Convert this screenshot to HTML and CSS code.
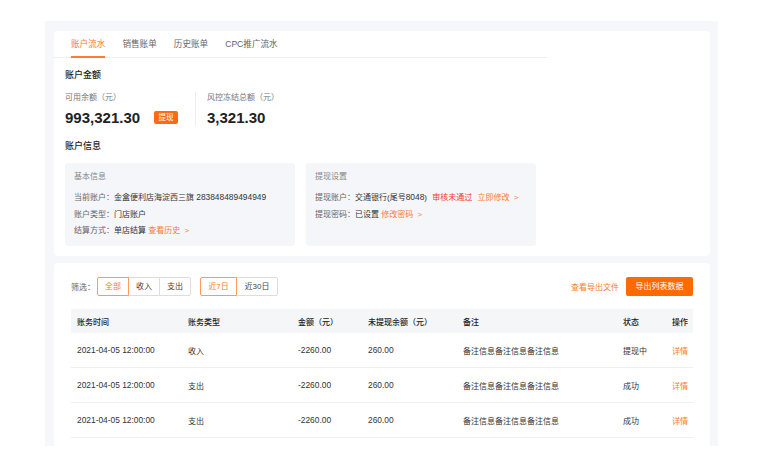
FILE: index.html
```html
<!DOCTYPE html>
<html lang="zh-CN">
<head>
<meta charset="UTF-8" />
<meta name="viewport" content="width=device-width, initial-scale=1" />
<title>账户流水</title>
<link rel="stylesheet" href="styles.css">
</head>
<body>
  <div class="panel">
    <div class="card card-top">
      <div class="tabs">
        <span class="tab active">账户流水</span>
        <span class="tab">销售账单</span>
        <span class="tab">历史账单</span>
        <span class="tab">CPC推广流水</span>
      </div>
      <div class="card-body">
        <div class="section-title">账户金额</div>
        <div class="amounts">
          <div class="amount">
            <div class="amount-label">可用余额（元）</div>
            <div class="amount-row">
              <span class="amount-value">993,321.30</span>
              <span class="badge">提现</span>
            </div>
          </div>
          <div class="amount amount-second">
            <div class="amount-label">风控冻结总额（元）</div>
            <div class="amount-row">
              <span class="amount-value">3,321.30</span>
            </div>
          </div>
        </div>

        <div class="section-title section-gap">账户信息</div>
        <div class="info-grid">
          <div class="info-box">
            <div class="info-title">基本信息</div>
            <div class="info-line"><span class="k">当前账户：</span>金盒便利店海淀西三旗&nbsp;<span class="num">283848489494949</span></div>
            <div class="info-line"><span class="k">账户类型：</span>门店账户</div>
            <div class="info-line"><span class="k">结算方式：</span>单店结算 <a class="link">查看历史 <span class="chev">&gt;</span></a></div>
          </div>
          <div class="info-box">
            <div class="info-title">提现设置</div>
            <div class="info-line"><span class="k">提现账户：</span>交通银行(尾号<span class="num">8048</span>) <span class="err">审核未通过</span> <a class="link">立即修改 <span class="chev">&gt;</span></a></div>
            <div class="info-line"><span class="k">提现密码：</span>已设置 <a class="link">修改密码 <span class="chev">&gt;</span></a></div>
          </div>
        </div>
      </div>
    </div>

    <div class="card card-list">
      <div class="toolbar">
        <div class="filters">
          <span class="filter-label">筛选：</span>
          <div class="btn-group">
            <span class="seg active">全部</span>
            <span class="seg">收入</span>
            <span class="seg">支出</span>
          </div>
          <div class="btn-group">
            <span class="seg seg-wide active">近7日</span>
            <span class="seg seg-wider">近30日</span>
          </div>
        </div>
        <div class="actions">
          <a class="link">查看导出文件</a>
          <span class="btn-primary">导出列表数据</span>
        </div>
      </div>

      <table class="table">
        <colgroup>
          <col style="width:111px"><col style="width:110px"><col style="width:70px"><col style="width:95px"><col style="width:160px"><col style="width:49px"><col style="width:27px">
        </colgroup>
        <thead>
          <tr><th>账务时间</th><th>账务类型</th><th>金额（元）</th><th>未提现余额（元）</th><th>备注</th><th>状态</th><th>操作</th></tr>
        </thead>
        <tbody>
          <tr><td class="num">2021-04-05 12:00:00</td><td>收入</td><td class="num">-2260.00</td><td class="num">260.00</td><td>备注信息备注信息备注信息</td><td>提现中</td><td><a class="link">详情</a></td></tr>
          <tr><td class="num">2021-04-05 12:00:00</td><td>支出</td><td class="num">-2260.00</td><td class="num">260.00</td><td>备注信息备注信息备注信息</td><td>成功</td><td><a class="link">详情</a></td></tr>
          <tr><td class="num">2021-04-05 12:00:00</td><td>支出</td><td class="num">-2260.00</td><td class="num">260.00</td><td>备注信息备注信息备注信息</td><td>成功</td><td><a class="link">详情</a></td></tr>
        </tbody>
      </table>
    </div>
  </div>
</body>
</html>
```

FILE: styles.css
```css
body {
  margin: 0;
  background: #fff;
  font-family: "Liberation Sans", "Noto Sans CJK SC", sans-serif;
  font-size: 8px;
  color: #333;
}
.num {
  font-size: 8.4px;
}
.panel {
  margin: 21px 0 0 45px;
  width: 673px;
  height: 425px;
  box-sizing: border-box;
  padding: 10px 8px 0 9px;
  background: #f6f7fb;
  overflow: hidden;
}
.card {
  background: #fff;
  border-radius: 4px;
}
.card-top {
  padding-bottom: 10px;
}
.tabs {
  display: flex;
  width: 476px;
  height: 26px;
  padding-left: 17px;
  border-bottom: 1px solid #eeeff2;
}
.tab {
  position: relative;
  margin-right: 17px;
  line-height: 26px;
  font-size: 8.6px;
  color: #666;
}
.tab.active {
  color: #ff7a2e;
}
.tab.active::after {
  content: "";
  position: absolute;
  left: 0;
  right: 0;
  bottom: -1px;
  height: 2px;
  background: #ff7a2e;
}
.card-body {
  padding: 0 11px;
}
.section-title {
  margin-top: 11px;
  line-height: 12px;
  font-size: 9px;
  font-weight: 500;
  color: #222;
}
.section-gap {
  margin-top: 14px;
}
.amounts {
  display: flex;
  margin-top: 11px;
}
.amount {
  width: 130px;
}
.amount-second {
  border-left: 1px solid #eee;
  padding-left: 11px;
}
.amount-label {
  line-height: 12px;
  color: #777;
}
.amount-row {
  display: flex;
  align-items: center;
  margin-top: 4px;
  height: 18px;
}
.amount-value {
  font-size: 15px;
  font-weight: bold;
  color: #222;
}
.badge {
  margin-left: 14px;
  width: 24px;
  height: 13px;
  line-height: 13px;
  text-align: center;
  border-radius: 2px;
  background: #ff6a13;
  color: #fff;
  font-size: 7.5px;
}
.info-grid {
  display: flex;
  gap: 11px;
  margin-top: 11px;
}
.info-box {
  width: 230px;
  height: 83px;
  box-sizing: border-box;
  padding: 8px 9px;
  background: #f5f6fa;
  border-radius: 3px;
}
.info-title {
  line-height: 12px;
  color: #888;
  margin-bottom: 6px;
}
.info-line {
  line-height: 16.5px;
  color: #333;
}
.info-line .k {
  color: #666;
}
.link {
  color: #ff7a2e;
  cursor: pointer;
}
.err {
  color: #f5392b;
  margin: 0 3px;
}
.chev {
  margin-left: 2px;
}
.card-list {
  margin-top: 7px;
  padding: 14px 17px 40px;
}
.toolbar {
  display: flex;
  justify-content: space-between;
  align-items: center;
  height: 19px;
}
.filters {
  display: flex;
  align-items: center;
}
.filter-label {
  width: 26px;
  color: #666;
}
.btn-group {
  display: flex;
  margin-right: 9px;
}
.seg {
  width: 32px;
  height: 19px;
  line-height: 17px;
  box-sizing: border-box;
  text-align: center;
  border: 1px solid #dcdde2;
  margin-left: -1px;
  color: #444;
  background: #fff;
}
.seg:first-child {
  margin-left: 0;
  border-radius: 2px 0 0 2px;
}
.seg:last-child {
  border-radius: 0 2px 2px 0;
}
.seg.active {
  position: relative;
  border-color: #ff9a5c;
  color: #ff7a2e;
}
.seg-wide { width: 37px; }
.seg-wider { width: 42px; }
.actions {
  display: flex;
  align-items: center;
  gap: 7px;
}
.btn-primary {
  width: 67px;
  height: 19px;
  line-height: 19px;
  text-align: center;
  border-radius: 2px;
  background: #ff6a00;
  color: #fff;
}
.table {
  margin-top: 13px;
  width: 622px;
  border-collapse: collapse;
  table-layout: fixed;
}
.table th {
  height: 24px;
  padding: 0 0 0 6px;
  background: #f5f6f8;
  text-align: left;
  font-weight: 500;
  color: #222;
}
.table td {
  height: 34px;
  padding: 0 0 0 6px;
  border-bottom: 1px solid #eeeff2;
  color: #333;
  white-space: nowrap;
}
```
